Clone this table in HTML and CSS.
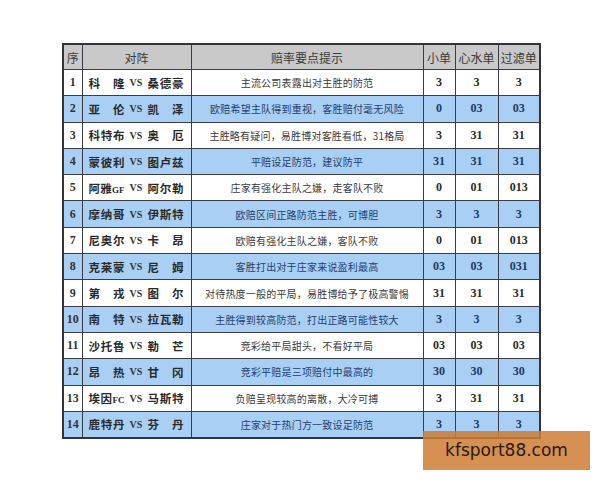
FILE: index.html
```html
<!DOCTYPE html>
<html lang="zh">
<head>
<meta charset="utf-8">
<link rel="stylesheet" href="styles.css">
</head>
<body>
<div class="page">
<table class="odds">
<colgroup>
<col class="c-no"><col class="c-match"><col class="c-tip"><col class="c-a"><col class="c-b"><col class="c-c">
</colgroup>
<thead>
<tr><th>序</th><th>对阵</th><th>赔率要点提示</th><th>小单</th><th>心水单</th><th>过滤单</th></tr>
</thead>
<tbody>
<tr><td class="no">1</td><td class="m"><div class="mv"><span class="t1">科 隆</span><span class="vs">VS</span><span class="t2">桑德豪</span></div></td><td class="tip">主流公司表露出对主胜的防范</td><td class="n">3</td><td class="n">3</td><td class="n">3</td></tr>
<tr class="blue"><td class="no">2</td><td class="m"><div class="mv"><span class="t1">亚 伦</span><span class="vs">VS</span><span class="t2">凯 泽</span></div></td><td class="tip">欧赔希望主队得到重视，客胜赔付毫无风险</td><td class="n">0</td><td class="n">03</td><td class="n">03</td></tr>
<tr><td class="no">3</td><td class="m"><div class="mv"><span class="t1">科特布</span><span class="vs">VS</span><span class="t2">奥 厄</span></div></td><td class="tip">主胜略有疑问，易胜博对客胜看低，31格局</td><td class="n">3</td><td class="n">31</td><td class="n">31</td></tr>
<tr class="blue"><td class="no">4</td><td class="m"><div class="mv"><span class="t1">蒙彼利</span><span class="vs">VS</span><span class="t2">图卢兹</span></div></td><td class="tip">平赔设足防范，建议防平</td><td class="n">31</td><td class="n">31</td><td class="n">31</td></tr>
<tr><td class="no">5</td><td class="m"><div class="mv"><span class="t1">阿雅<small>GF</small></span><span class="vs">VS</span><span class="t2">阿尔勒</span></div></td><td class="tip">庄家有强化主队之嫌，走客队不败</td><td class="n">0</td><td class="n">01</td><td class="n">013</td></tr>
<tr class="blue"><td class="no">6</td><td class="m"><div class="mv"><span class="t1">摩纳哥</span><span class="vs">VS</span><span class="t2">伊斯特</span></div></td><td class="tip">欧赔区间正路防范主胜，可博胆</td><td class="n">3</td><td class="n">3</td><td class="n">3</td></tr>
<tr><td class="no">7</td><td class="m"><div class="mv"><span class="t1">尼奥尔</span><span class="vs">VS</span><span class="t2">卡 昂</span></div></td><td class="tip">欧赔有强化主队之嫌，客队不败</td><td class="n">0</td><td class="n">01</td><td class="n">013</td></tr>
<tr class="blue"><td class="no">8</td><td class="m"><div class="mv"><span class="t1">克莱蒙</span><span class="vs">VS</span><span class="t2">尼 姆</span></div></td><td class="tip">客胜打出对于庄家来说盈利最高</td><td class="n">03</td><td class="n">03</td><td class="n">031</td></tr>
<tr><td class="no">9</td><td class="m"><div class="mv"><span class="t1">第 戎</span><span class="vs">VS</span><span class="t2">图 尔</span></div></td><td class="tip">对待热度一般的平局，易胜博给予了极高警惕</td><td class="n">31</td><td class="n">31</td><td class="n">31</td></tr>
<tr class="blue"><td class="no">10</td><td class="m"><div class="mv"><span class="t1">南 特</span><span class="vs">VS</span><span class="t2">拉瓦勒</span></div></td><td class="tip">主胜得到较高防范，打出正路可能性较大</td><td class="n">3</td><td class="n">3</td><td class="n">3</td></tr>
<tr><td class="no">11</td><td class="m"><div class="mv"><span class="t1">沙托鲁</span><span class="vs">VS</span><span class="t2">勒 芒</span></div></td><td class="tip">竞彩给平局甜头，不看好平局</td><td class="n">03</td><td class="n">03</td><td class="n">03</td></tr>
<tr class="blue"><td class="no">12</td><td class="m"><div class="mv"><span class="t1">昂 热</span><span class="vs">VS</span><span class="t2">甘 冈</span></div></td><td class="tip">竞彩平赔是三项赔付中最高的</td><td class="n">30</td><td class="n">30</td><td class="n">30</td></tr>
<tr><td class="no">13</td><td class="m"><div class="mv"><span class="t1">埃因<small>FC</small></span><span class="vs">VS</span><span class="t2">马斯特</span></div></td><td class="tip">负赔呈现较高的离散，大冷可搏</td><td class="n">3</td><td class="n">31</td><td class="n">31</td></tr>
<tr class="blue"><td class="no">14</td><td class="m"><div class="mv"><span class="t1">鹿特丹</span><span class="vs">VS</span><span class="t2">芬 丹</span></div></td><td class="tip">庄家对于热门方一致设足防范</td><td class="n">3</td><td class="n">3</td><td class="n">3</td></tr>
</tbody>
</table>
<div class="mark">kfsport88.com</div>
</div>
</body>
</html>
```
FILE: styles.css
```css
html, body {
  margin: 0;
  padding: 0;
  background: #ffffff;
}
.page {
  position: relative;
  width: 600px;
  height: 480px;
  padding: 43px 0 0 62px;
  box-sizing: border-box;
}
.odds {
  border-collapse: collapse;
  table-layout: fixed;
  width: 477px;
  font-family: "Noto Sans CJK SC", "Liberation Serif", serif;
  color: #2a2a2a;
  border: 2px solid #33333a;
}
.c-no { width: 19px; }
.c-match { width: 109px; }
.c-tip { width: 232px; }
.c-a { width: 32px; }
.c-b { width: 43px; }
.c-c { width: 42px; }
.odds th, .odds td {
  border: 1px solid #3c3c44;
  padding: 0;
  text-align: center;
  vertical-align: middle;
}
.odds th {
  height: 24px;
  background: #c9c9c9;
  font-weight: normal;
  font-size: 12px;
  color: #3a3a3a;
}
.odds tbody tr {
  height: 26.3px;
}
.odds tr.blue td {
  background: #a9cff4;
}
.no {
  font-family: "Liberation Serif", serif;
  font-weight: bold;
  font-size: 12px;
  color: #333;
}
.m {
  font-weight: bold;
  font-size: 11.5px;
  color: #2a2a2a;
}
.mv {
  display: flex;
  align-items: center;
  justify-content: space-between;
  padding: 0 7px 0 6px;
}
.t1, .t2 {
  width: 36px;
  text-align: justify;
  text-align-last: justify;
  white-space: nowrap;
}
.t1 small, .t2 small {
  font-family: "Liberation Serif", serif;
  font-size: 9px;
  font-weight: bold;
}
.vs {
  font-family: "Liberation Serif", serif;
  font-size: 10px;
  font-weight: bold;
  color: #333;
}
.tip {
  font-size: 10px;
  letter-spacing: 0.2px;
  color: #3a3a3a;
  white-space: nowrap;
  overflow: hidden;
}
tr.blue .tip { color: #24406e; }
.n {
  font-family: "Liberation Serif", serif;
  font-weight: bold;
  font-size: 12px;
  color: #2a2a2a;
}
tr.blue .n { color: #203a66; }
.mark {
  position: absolute;
  left: 423px;
  top: 431px;
  width: 167px;
  height: 39px;
  background: rgba(206, 124, 52, 0.85);
  font-family: "DejaVu Sans", sans-serif;
  font-size: 17px;
  line-height: 39px;
  text-align: center;
  color: #2a1a0e;
}
```
